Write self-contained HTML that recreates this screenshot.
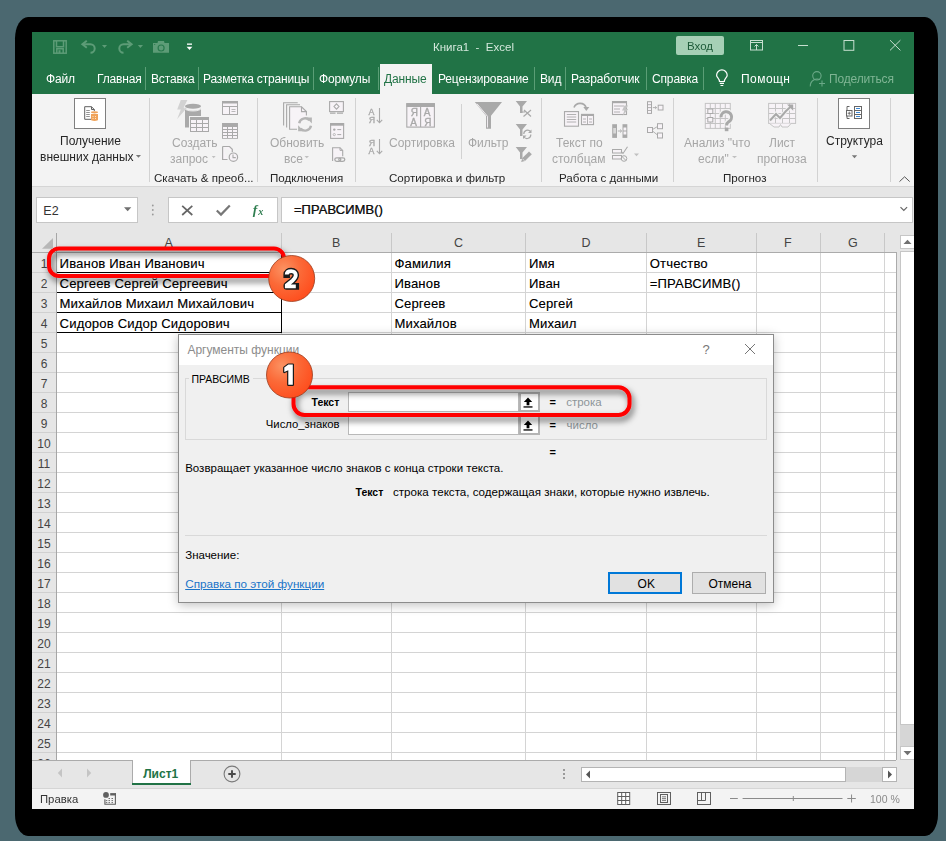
<!DOCTYPE html>
<html><head><meta charset="utf-8">
<style>
*{margin:0;padding:0;box-sizing:border-box}
html,body{width:946px;height:841px;overflow:hidden;background:#4b6870;font-family:"Liberation Sans",sans-serif;position:relative}
.a{position:absolute}
.t{position:absolute;white-space:nowrap;line-height:1}
svg{position:absolute;overflow:visible}
</style></head><body>
<div class="a" style="left:15px;top:17px;width:923px;height:819px;background:#000;border-radius:13px / 21.5px"></div>
<div class="a" style="left:32px;top:32px;width:882px;height:777px;background:#fff;"></div>
<div class="a" style="left:32px;top:32px;width:882px;height:62px;background:#217346;"></div>
<div class="t" style="left:432.50px;top:42px;font-size:11.5px;color:#d4e8dc;font-weight:normal;will-change:transform">Книга1&nbsp; -&nbsp; Excel</div>
<div class="a" style="left:676px;top:36px;width:48px;height:19px;background:#a6d0b6;border-radius:2px"></div>
<div class="t" style="left:687.00px;top:41px;font-size:11.5px;color:#1e5b39;font-weight:normal;will-change:transform">Вход</div>
<div class="t" style="left:46.00px;top:73px;font-size:12px;color:#fff;font-weight:normal;will-change:transform;letter-spacing:-0.15px">Файл</div>
<div class="t" style="left:97.00px;top:73px;font-size:12px;color:#fff;font-weight:normal;will-change:transform;letter-spacing:-0.15px">Главная</div>
<div class="t" style="left:151.00px;top:73px;font-size:12px;color:#fff;font-weight:normal;will-change:transform;letter-spacing:-0.15px">Вставка</div>
<div class="t" style="left:203.00px;top:73px;font-size:12px;color:#fff;font-weight:normal;will-change:transform;letter-spacing:-0.15px">Разметка страницы</div>
<div class="t" style="left:319.00px;top:73px;font-size:12px;color:#fff;font-weight:normal;will-change:transform;letter-spacing:-0.15px">Формулы</div>
<div class="t" style="left:438.00px;top:73px;font-size:12px;color:#fff;font-weight:normal;will-change:transform;letter-spacing:-0.15px">Рецензирование</div>
<div class="t" style="left:540.00px;top:73px;font-size:12px;color:#fff;font-weight:normal;will-change:transform;letter-spacing:-0.15px">Вид</div>
<div class="t" style="left:571.00px;top:73px;font-size:12px;color:#fff;font-weight:normal;will-change:transform;letter-spacing:-0.15px">Разработчик</div>
<div class="t" style="left:652.00px;top:73px;font-size:12px;color:#fff;font-weight:normal;will-change:transform;letter-spacing:-0.15px">Справка</div>
<div class="t" style="left:741.00px;top:73px;font-size:12px;color:#fff;font-weight:normal;will-change:transform;letter-spacing:0.45px">Помощн</div>
<div class="a" style="left:145px;top:67px;width:1px;height:23px;background:#5a9e76;"></div>
<div class="a" style="left:198px;top:67px;width:1px;height:23px;background:#5a9e76;"></div>
<div class="a" style="left:313px;top:67px;width:1px;height:23px;background:#5a9e76;"></div>
<div class="a" style="left:378px;top:67px;width:1px;height:23px;background:#5a9e76;"></div>
<div class="a" style="left:534px;top:67px;width:1px;height:23px;background:#5a9e76;"></div>
<div class="a" style="left:565px;top:67px;width:1px;height:23px;background:#5a9e76;"></div>
<div class="a" style="left:646px;top:67px;width:1px;height:23px;background:#5a9e76;"></div>
<div class="a" style="left:703px;top:67px;width:1px;height:23px;background:#5a9e76;"></div>
<div class="a" style="left:380px;top:64px;width:52px;height:30px;background:#f3f3f3;"></div>
<div class="t" style="left:383.50px;top:73px;font-size:12px;color:#217346;font-weight:normal;will-change:transform;letter-spacing:-0.15px">Данные</div>
<div class="t" style="left:829.00px;top:73px;font-size:12px;color:#7fb594;font-weight:normal;will-change:transform;letter-spacing:-0.15px">Поделиться</div>
<div class="a" style="left:32px;top:94px;width:882px;height:92px;background:#f3f3f3;"></div>
<div class="a" style="left:32px;top:186px;width:882px;height:1px;background:#d5d5d5;"></div>
<div class="a" style="left:32px;top:187px;width:882px;height:45px;background:#e6e6e6;"></div>
<div class="t" style="left:59.50px;top:135px;font-size:12px;color:#262626;font-weight:normal;will-change:transform">Получение</div>
<div class="t" style="left:39.80px;top:151px;font-size:12px;color:#262626;font-weight:normal;will-change:transform">внешних данных</div>
<div class="t" style="left:153.70px;top:172px;font-size:11.6px;color:#262626;font-weight:normal;will-change:transform">Скачать &amp; преоб...</div>
<div class="t" style="left:172.00px;top:137px;font-size:12px;color:#a6a6a6;font-weight:normal;will-change:transform">Создать</div>
<div class="t" style="left:169.50px;top:153px;font-size:12px;color:#a6a6a6;font-weight:normal;will-change:transform">запрос</div>
<div class="t" style="left:269.50px;top:137px;font-size:12px;color:#a6a6a6;font-weight:normal;will-change:transform">Обновить</div>
<div class="t" style="left:283.70px;top:153px;font-size:12px;color:#a6a6a6;font-weight:normal;will-change:transform">все</div>
<div class="t" style="left:269.50px;top:172px;font-size:11.6px;color:#262626;font-weight:normal;will-change:transform">Подключения</div>
<div class="t" style="left:388.70px;top:137px;font-size:12px;color:#a6a6a6;font-weight:normal;will-change:transform">Сортировка</div>
<div class="t" style="left:468.00px;top:137px;font-size:12px;color:#a6a6a6;font-weight:normal;will-change:transform">Фильтр</div>
<div class="t" style="left:389.30px;top:172px;font-size:11.6px;color:#262626;font-weight:normal;will-change:transform">Сортировка и фильтр</div>
<div class="t" style="left:556.00px;top:137px;font-size:12px;color:#a6a6a6;font-weight:normal;will-change:transform">Текст по</div>
<div class="t" style="left:552.00px;top:153px;font-size:12px;color:#a6a6a6;font-weight:normal;will-change:transform">столбцам</div>
<div class="t" style="left:559.30px;top:172px;font-size:11.6px;color:#262626;font-weight:normal;will-change:transform">Работа с данными</div>
<div class="t" style="left:684.00px;top:137px;font-size:12px;color:#a6a6a6;font-weight:normal;will-change:transform">Анализ "что</div>
<div class="t" style="left:698.20px;top:153px;font-size:12px;color:#a6a6a6;font-weight:normal;will-change:transform">если"</div>
<div class="t" style="left:768.60px;top:137px;font-size:12px;color:#a6a6a6;font-weight:normal;will-change:transform">Лист</div>
<div class="t" style="left:756.90px;top:153px;font-size:12px;color:#a6a6a6;font-weight:normal;will-change:transform">прогноза</div>
<div class="t" style="left:722.60px;top:172px;font-size:11.6px;color:#262626;font-weight:normal;will-change:transform">Прогноз</div>
<div class="t" style="left:826.00px;top:135px;font-size:12px;color:#262626;font-weight:normal;will-change:transform">Структура</div>
<div class="a" style="left:149px;top:98px;width:1px;height:84px;background:#d2d2d2;"></div>
<div class="a" style="left:257px;top:98px;width:1px;height:84px;background:#d2d2d2;"></div>
<div class="a" style="left:355px;top:98px;width:1px;height:84px;background:#d2d2d2;"></div>
<div class="a" style="left:541px;top:98px;width:1px;height:84px;background:#d2d2d2;"></div>
<div class="a" style="left:673px;top:98px;width:1px;height:84px;background:#d2d2d2;"></div>
<div class="a" style="left:817px;top:98px;width:1px;height:84px;background:#d2d2d2;"></div>
<div class="a" style="left:890px;top:98px;width:1px;height:84px;background:#d2d2d2;"></div>
<div class="a" style="left:461px;top:104px;width:1px;height:55px;background:#d2d2d2;"></div>
<div class="a" style="left:36px;top:197px;width:102px;height:26px;background:#fff;border:1px solid #c6c6c6"></div>
<div class="t" style="left:43.30px;top:205px;font-size:12.5px;color:#333;font-weight:normal;">E2</div>
<div class="a" style="left:168px;top:197px;width:110px;height:26px;background:#fff;border:1px solid #c6c6c6"></div>
<div class="a" style="left:281px;top:197px;width:632px;height:26px;background:#fff;border:1px solid #c6c6c6"></div>
<div class="t" style="left:293.70px;top:203px;font-size:13px;color:#111;font-weight:normal;letter-spacing:0.05px;text-shadow:0.45px 0 0 rgba(0,0,0,0.7)">=ПРАВСИМВ()</div>
<div class="a" style="left:32px;top:232px;width:864px;height:528px;background:#e6e6e6;"></div>
<div class="a" style="left:57px;top:252px;width:840px;height:508px;background:#fff;"></div>
<div class="a" style="left:281px;top:252px;width:1px;height:508px;background:#d4d4d4;"></div>
<div class="a" style="left:281px;top:233px;width:1px;height:19px;background:#c8c8c8;"></div>
<div class="a" style="left:391px;top:252px;width:1px;height:508px;background:#d4d4d4;"></div>
<div class="a" style="left:391px;top:233px;width:1px;height:19px;background:#c8c8c8;"></div>
<div class="a" style="left:525px;top:252px;width:1px;height:508px;background:#d4d4d4;"></div>
<div class="a" style="left:525px;top:233px;width:1px;height:19px;background:#c8c8c8;"></div>
<div class="a" style="left:646px;top:252px;width:1px;height:508px;background:#d4d4d4;"></div>
<div class="a" style="left:646px;top:233px;width:1px;height:19px;background:#c8c8c8;"></div>
<div class="a" style="left:756px;top:252px;width:1px;height:508px;background:#d4d4d4;"></div>
<div class="a" style="left:756px;top:233px;width:1px;height:19px;background:#c8c8c8;"></div>
<div class="a" style="left:820px;top:252px;width:1px;height:508px;background:#d4d4d4;"></div>
<div class="a" style="left:820px;top:233px;width:1px;height:19px;background:#c8c8c8;"></div>
<div class="a" style="left:884px;top:252px;width:1px;height:508px;background:#d4d4d4;"></div>
<div class="a" style="left:884px;top:233px;width:1px;height:19px;background:#c8c8c8;"></div>
<div class="a" style="left:56px;top:233px;width:1px;height:527px;background:#bdbdbd;"></div>
<div class="a" style="left:57px;top:272px;width:840px;height:1px;background:#d4d4d4;"></div>
<div class="a" style="left:32px;top:272px;width:24px;height:1px;background:#d0d0d0;"></div>
<div class="a" style="left:57px;top:292px;width:840px;height:1px;background:#d4d4d4;"></div>
<div class="a" style="left:32px;top:292px;width:24px;height:1px;background:#d0d0d0;"></div>
<div class="a" style="left:57px;top:312px;width:840px;height:1px;background:#d4d4d4;"></div>
<div class="a" style="left:32px;top:312px;width:24px;height:1px;background:#d0d0d0;"></div>
<div class="a" style="left:57px;top:332px;width:840px;height:1px;background:#d4d4d4;"></div>
<div class="a" style="left:32px;top:332px;width:24px;height:1px;background:#d0d0d0;"></div>
<div class="a" style="left:57px;top:352px;width:840px;height:1px;background:#d4d4d4;"></div>
<div class="a" style="left:32px;top:352px;width:24px;height:1px;background:#d0d0d0;"></div>
<div class="a" style="left:57px;top:372px;width:840px;height:1px;background:#d4d4d4;"></div>
<div class="a" style="left:32px;top:372px;width:24px;height:1px;background:#d0d0d0;"></div>
<div class="a" style="left:57px;top:392px;width:840px;height:1px;background:#d4d4d4;"></div>
<div class="a" style="left:32px;top:392px;width:24px;height:1px;background:#d0d0d0;"></div>
<div class="a" style="left:57px;top:412px;width:840px;height:1px;background:#d4d4d4;"></div>
<div class="a" style="left:32px;top:412px;width:24px;height:1px;background:#d0d0d0;"></div>
<div class="a" style="left:57px;top:432px;width:840px;height:1px;background:#d4d4d4;"></div>
<div class="a" style="left:32px;top:432px;width:24px;height:1px;background:#d0d0d0;"></div>
<div class="a" style="left:57px;top:452px;width:840px;height:1px;background:#d4d4d4;"></div>
<div class="a" style="left:32px;top:452px;width:24px;height:1px;background:#d0d0d0;"></div>
<div class="a" style="left:57px;top:472px;width:840px;height:1px;background:#d4d4d4;"></div>
<div class="a" style="left:32px;top:472px;width:24px;height:1px;background:#d0d0d0;"></div>
<div class="a" style="left:57px;top:492px;width:840px;height:1px;background:#d4d4d4;"></div>
<div class="a" style="left:32px;top:492px;width:24px;height:1px;background:#d0d0d0;"></div>
<div class="a" style="left:57px;top:512px;width:840px;height:1px;background:#d4d4d4;"></div>
<div class="a" style="left:32px;top:512px;width:24px;height:1px;background:#d0d0d0;"></div>
<div class="a" style="left:57px;top:532px;width:840px;height:1px;background:#d4d4d4;"></div>
<div class="a" style="left:32px;top:532px;width:24px;height:1px;background:#d0d0d0;"></div>
<div class="a" style="left:57px;top:552px;width:840px;height:1px;background:#d4d4d4;"></div>
<div class="a" style="left:32px;top:552px;width:24px;height:1px;background:#d0d0d0;"></div>
<div class="a" style="left:57px;top:572px;width:840px;height:1px;background:#d4d4d4;"></div>
<div class="a" style="left:32px;top:572px;width:24px;height:1px;background:#d0d0d0;"></div>
<div class="a" style="left:57px;top:592px;width:840px;height:1px;background:#d4d4d4;"></div>
<div class="a" style="left:32px;top:592px;width:24px;height:1px;background:#d0d0d0;"></div>
<div class="a" style="left:57px;top:612px;width:840px;height:1px;background:#d4d4d4;"></div>
<div class="a" style="left:32px;top:612px;width:24px;height:1px;background:#d0d0d0;"></div>
<div class="a" style="left:57px;top:632px;width:840px;height:1px;background:#d4d4d4;"></div>
<div class="a" style="left:32px;top:632px;width:24px;height:1px;background:#d0d0d0;"></div>
<div class="a" style="left:57px;top:652px;width:840px;height:1px;background:#d4d4d4;"></div>
<div class="a" style="left:32px;top:652px;width:24px;height:1px;background:#d0d0d0;"></div>
<div class="a" style="left:57px;top:672px;width:840px;height:1px;background:#d4d4d4;"></div>
<div class="a" style="left:32px;top:672px;width:24px;height:1px;background:#d0d0d0;"></div>
<div class="a" style="left:57px;top:692px;width:840px;height:1px;background:#d4d4d4;"></div>
<div class="a" style="left:32px;top:692px;width:24px;height:1px;background:#d0d0d0;"></div>
<div class="a" style="left:57px;top:712px;width:840px;height:1px;background:#d4d4d4;"></div>
<div class="a" style="left:32px;top:712px;width:24px;height:1px;background:#d0d0d0;"></div>
<div class="a" style="left:57px;top:732px;width:840px;height:1px;background:#d4d4d4;"></div>
<div class="a" style="left:32px;top:732px;width:24px;height:1px;background:#d0d0d0;"></div>
<div class="a" style="left:57px;top:752px;width:840px;height:1px;background:#d4d4d4;"></div>
<div class="a" style="left:32px;top:752px;width:24px;height:1px;background:#d0d0d0;"></div>
<div class="a" style="left:57px;top:772px;width:840px;height:1px;background:#d4d4d4;"></div>
<div class="a" style="left:32px;top:772px;width:24px;height:1px;background:#d0d0d0;"></div>
<div class="a" style="left:32px;top:252px;width:865px;height:1px;background:#ababab;"></div>
<div class="a" style="left:896px;top:252px;width:1px;height:508px;background:#ababab;"></div>
<div class="t" style="left:164.50px;top:237px;font-size:12.5px;color:#444;font-weight:normal;">A</div>
<div class="t" style="left:332.00px;top:237px;font-size:12.5px;color:#444;font-weight:normal;">B</div>
<div class="t" style="left:454.00px;top:237px;font-size:12.5px;color:#444;font-weight:normal;">C</div>
<div class="t" style="left:581.50px;top:237px;font-size:12.5px;color:#444;font-weight:normal;">D</div>
<div class="t" style="left:697.00px;top:237px;font-size:12.5px;color:#444;font-weight:normal;">E</div>
<div class="t" style="left:784.00px;top:237px;font-size:12.5px;color:#444;font-weight:normal;">F</div>
<div class="t" style="left:848.00px;top:237px;font-size:12.5px;color:#444;font-weight:normal;">G</div>
<div class="t" style="left:-6.00px;width:100px;text-align:center;top:258px;font-size:12px;color:#444;font-weight:normal;">1</div>
<div class="t" style="left:-6.00px;width:100px;text-align:center;top:278px;font-size:12px;color:#444;font-weight:normal;">2</div>
<div class="t" style="left:-6.00px;width:100px;text-align:center;top:298px;font-size:12px;color:#444;font-weight:normal;">3</div>
<div class="t" style="left:-6.00px;width:100px;text-align:center;top:318px;font-size:12px;color:#444;font-weight:normal;">4</div>
<div class="t" style="left:-6.00px;width:100px;text-align:center;top:338px;font-size:12px;color:#444;font-weight:normal;">5</div>
<div class="t" style="left:-6.00px;width:100px;text-align:center;top:358px;font-size:12px;color:#444;font-weight:normal;">6</div>
<div class="t" style="left:-6.00px;width:100px;text-align:center;top:378px;font-size:12px;color:#444;font-weight:normal;">7</div>
<div class="t" style="left:-6.00px;width:100px;text-align:center;top:398px;font-size:12px;color:#444;font-weight:normal;">8</div>
<div class="t" style="left:-6.00px;width:100px;text-align:center;top:418px;font-size:12px;color:#444;font-weight:normal;">9</div>
<div class="t" style="left:-6.00px;width:100px;text-align:center;top:438px;font-size:12px;color:#444;font-weight:normal;">10</div>
<div class="t" style="left:-6.00px;width:100px;text-align:center;top:458px;font-size:12px;color:#444;font-weight:normal;">11</div>
<div class="t" style="left:-6.00px;width:100px;text-align:center;top:478px;font-size:12px;color:#444;font-weight:normal;">12</div>
<div class="t" style="left:-6.00px;width:100px;text-align:center;top:498px;font-size:12px;color:#444;font-weight:normal;">13</div>
<div class="t" style="left:-6.00px;width:100px;text-align:center;top:518px;font-size:12px;color:#444;font-weight:normal;">14</div>
<div class="t" style="left:-6.00px;width:100px;text-align:center;top:538px;font-size:12px;color:#444;font-weight:normal;">15</div>
<div class="t" style="left:-6.00px;width:100px;text-align:center;top:558px;font-size:12px;color:#444;font-weight:normal;">16</div>
<div class="t" style="left:-6.00px;width:100px;text-align:center;top:578px;font-size:12px;color:#444;font-weight:normal;">17</div>
<div class="t" style="left:-6.00px;width:100px;text-align:center;top:598px;font-size:12px;color:#444;font-weight:normal;">18</div>
<div class="t" style="left:-6.00px;width:100px;text-align:center;top:618px;font-size:12px;color:#444;font-weight:normal;">19</div>
<div class="t" style="left:-6.00px;width:100px;text-align:center;top:638px;font-size:12px;color:#444;font-weight:normal;">20</div>
<div class="t" style="left:-6.00px;width:100px;text-align:center;top:658px;font-size:12px;color:#444;font-weight:normal;">21</div>
<div class="t" style="left:-6.00px;width:100px;text-align:center;top:678px;font-size:12px;color:#444;font-weight:normal;">22</div>
<div class="t" style="left:-6.00px;width:100px;text-align:center;top:698px;font-size:12px;color:#444;font-weight:normal;">23</div>
<div class="t" style="left:-6.00px;width:100px;text-align:center;top:718px;font-size:12px;color:#444;font-weight:normal;">24</div>
<div class="t" style="left:-6.00px;width:100px;text-align:center;top:738px;font-size:12px;color:#444;font-weight:normal;">25</div>
<div class="t" style="left:-6.00px;width:100px;text-align:center;top:758px;font-size:12px;color:#444;font-weight:normal;">26</div>
<div class="a" style="left:32px;top:760px;width:882px;height:28px;background:#e6e6e6;"></div>
<div class="a" style="left:32px;top:760px;width:864px;height:1px;background:#ababab;"></div>
<div class="a" style="left:32px;top:788px;width:882px;height:21px;background:#f3f3f3;"></div>
<div class="a" style="left:32px;top:788px;width:882px;height:1px;background:#d5d5d5;"></div>
<div class="a" style="left:896px;top:232px;width:18px;height:528px;background:#e6e6e6;"></div>
<div class="a" style="left:896px;top:252px;width:1px;height:508px;background:#ababab;"></div>
<div class="a" style="left:900px;top:235px;width:14px;height:14px;background:#fff;border:1px solid #c6c6c6;border-right:none"></div>
<div class="a" style="left:900px;top:251px;width:14px;height:474px;background:#fff;border:1px solid #c6c6c6;border-right:none"></div>
<div class="a" style="left:900px;top:725px;width:14px;height:21px;background:#d6d6d6;"></div>
<div class="a" style="left:900px;top:746px;width:14px;height:14px;background:#fff;border:1px solid #c6c6c6;border-right:none"></div>
<svg style="left:903px;top:239px" width="9" height="6"><path d="M0.5 5 L4.5 0.8 L8.5 5Z" fill="#707070"/></svg>
<svg style="left:903px;top:750px" width="9" height="6"><path d="M0.5 1 L4.5 5.2 L8.5 1Z" fill="#707070"/></svg>
<svg style="left:57px;top:768px" width="6" height="10"><path d="M5 0.5 L0.8 5 L5 9.5Z" fill="#c4c4c4"/></svg>
<svg style="left:86px;top:768px" width="6" height="10"><path d="M1 0.5 L5.2 5 L1 9.5Z" fill="#c4c4c4"/></svg>
<div class="a" style="left:131.5px;top:760px;width:59px;height:24px;background:#fff;border-left:1px solid #ababab;border-right:1px solid #ababab"></div>
<div class="a" style="left:131.5px;top:783px;width:59px;height:2px;background:#217346;"></div>
<div class="t" style="left:143.20px;top:768px;font-size:12px;color:#217346;font-weight:bold;">Лист1</div>
<svg style="left:223px;top:765px" width="18" height="18"><circle cx="9" cy="9" r="7.9" fill="none" stroke="#7a7a7a" stroke-width="1.1"/><path d="M9 5.3V12.7M5.3 9H12.7" stroke="#4a4a4a" stroke-width="1.9"/></svg>
<div class="a" style="left:563px;top:769px;width:2px;height:2px;background:#9a9a9a;"></div>
<div class="a" style="left:563px;top:773px;width:2px;height:2px;background:#9a9a9a;"></div>
<div class="a" style="left:563px;top:777px;width:2px;height:2px;background:#9a9a9a;"></div>
<div class="a" style="left:580.5px;top:767px;width:15px;height:15px;background:#fff;border:1px solid #b4b4b4"></div>
<div class="a" style="left:595px;top:767px;width:251px;height:15px;background:#fff;border:1px solid #b4b4b4;border-left:none"></div>
<div class="a" style="left:846px;top:767px;width:36px;height:15px;background:#d6d6d6;"></div>
<div class="a" style="left:882px;top:767px;width:15px;height:15px;background:#fff;border:1px solid #b4b4b4"></div>
<svg style="left:585px;top:770px" width="6" height="9"><path d="M5 0.5 L1 4.5 L5 8.5Z" fill="#555"/></svg>
<svg style="left:887px;top:770px" width="6" height="9"><path d="M1 0.5 L5 4.5 L1 8.5Z" fill="#555"/></svg>
<div class="t" style="left:39.50px;top:794px;font-size:11.3px;color:#333;font-weight:normal;will-change:transform">Правка</div>
<div class="t" style="left:869.50px;top:794px;font-size:10.5px;color:#8a8a8a;font-weight:normal;will-change:transform">100 %</div>
<div class="t" style="left:59.60px;top:257px;font-size:13px;color:#000;font-weight:normal;letter-spacing:0.2px;text-shadow:0.3px 0 0 rgba(0,0,0,0.35)">Иванов Иван Иванович</div>
<div class="t" style="left:59.60px;top:277px;font-size:13px;color:#000;font-weight:normal;letter-spacing:0.2px;text-shadow:0.3px 0 0 rgba(0,0,0,0.35)">Сергеев Сергей Сергеевич</div>
<div class="t" style="left:59.60px;top:297px;font-size:13px;color:#000;font-weight:normal;letter-spacing:0.2px;text-shadow:0.3px 0 0 rgba(0,0,0,0.35)">Михайлов Михаил Михайлович</div>
<div class="t" style="left:59.60px;top:317px;font-size:13px;color:#000;font-weight:normal;letter-spacing:0.2px;text-shadow:0.3px 0 0 rgba(0,0,0,0.35)">Сидоров Сидор Сидорович</div>
<div class="t" style="left:394.40px;top:257px;font-size:13px;color:#000;font-weight:normal;letter-spacing:0.2px;text-shadow:0.3px 0 0 rgba(0,0,0,0.35)">Фамилия</div>
<div class="t" style="left:528.90px;top:257px;font-size:13px;color:#000;font-weight:normal;letter-spacing:0.2px;text-shadow:0.3px 0 0 rgba(0,0,0,0.35)">Имя</div>
<div class="t" style="left:649.70px;top:257px;font-size:13px;color:#000;font-weight:normal;letter-spacing:0.2px;text-shadow:0.3px 0 0 rgba(0,0,0,0.35)">Отчество</div>
<div class="t" style="left:394.40px;top:277px;font-size:13px;color:#000;font-weight:normal;letter-spacing:0.2px;text-shadow:0.3px 0 0 rgba(0,0,0,0.35)">Иванов</div>
<div class="t" style="left:528.90px;top:277px;font-size:13px;color:#000;font-weight:normal;letter-spacing:0.2px;text-shadow:0.3px 0 0 rgba(0,0,0,0.35)">Иван</div>
<div class="t" style="left:649.70px;top:277px;font-size:13px;color:#000;font-weight:normal;letter-spacing:0.2px;text-shadow:0.3px 0 0 rgba(0,0,0,0.35)">=ПРАВСИМВ()</div>
<div class="t" style="left:394.40px;top:297px;font-size:13px;color:#000;font-weight:normal;letter-spacing:0.2px;text-shadow:0.3px 0 0 rgba(0,0,0,0.35)">Сергеев</div>
<div class="t" style="left:528.90px;top:297px;font-size:13px;color:#000;font-weight:normal;letter-spacing:0.2px;text-shadow:0.3px 0 0 rgba(0,0,0,0.35)">Сергей</div>
<div class="t" style="left:394.40px;top:317px;font-size:13px;color:#000;font-weight:normal;letter-spacing:0.2px;text-shadow:0.3px 0 0 rgba(0,0,0,0.35)">Михайлов</div>
<div class="t" style="left:528.90px;top:317px;font-size:13px;color:#000;font-weight:normal;letter-spacing:0.2px;text-shadow:0.3px 0 0 rgba(0,0,0,0.35)">Михаил</div>
<div class="a" style="left:57px;top:272px;width:225px;height:1px;background:#000;"></div>
<div class="a" style="left:57px;top:292px;width:225px;height:1px;background:#000;"></div>
<div class="a" style="left:57px;top:312px;width:225px;height:1px;background:#000;"></div>
<div class="a" style="left:57px;top:332px;width:225px;height:1px;background:#000;"></div>
<div class="a" style="left:281px;top:252px;width:1px;height:81px;background:#000;"></div>
<div class="a" style="left:56px;top:233px;width:1px;height:527px;background:#a6a6a6;"></div>
<div class="a" style="left:178px;top:334px;width:596px;height:269px;background:#f0f0f0;border:1px solid #8c8c8c;box-shadow:0 2px 10px rgba(0,0,0,0.25)"></div>
<div class="a" style="left:179px;top:335px;width:594px;height:30px;background:#fff;"></div>
<div class="t" style="left:187.40px;top:344px;font-size:12px;color:#8c8c8c;font-weight:normal;">Аргументы функции</div>
<div class="t" style="left:702.50px;top:343px;font-size:13px;color:#777;font-weight:normal;">?</div>
<svg style="left:744px;top:343px" width="12" height="12"><path d="M1 1L11 11M11 1L1 11" stroke="#666" stroke-width="0.9"/></svg>
<div class="a" style="left:185px;top:378px;width:582px;height:62px;background:none;border:1px solid #d9d9d9"></div>
<div class="a" style="left:189px;top:374px;width:64px;height:10px;background:#f0f0f0;"></div>
<div class="t" style="left:191.40px;top:374px;font-size:10.5px;color:#000;font-weight:normal;">ПРАВСИМВ</div>
<div class="t" style="left:311.50px;top:397px;font-size:10.5px;color:#000;font-weight:bold;">Текст</div>
<div class="t" style="left:265.80px;top:419px;font-size:11.3px;color:#000;font-weight:normal;">Число_знаков</div>
<div class="a" style="left:348px;top:392px;width:171px;height:20px;background:#fff;border:1px solid #b9b9b9"></div>
<div class="a" style="left:348px;top:415px;width:171px;height:20px;background:#fff;border:1px solid #b9b9b9"></div>
<div class="a" style="left:518.5px;top:392px;width:21px;height:19.5px;background:#fff;border:2px solid #b4b4b4"></div>
<svg style="left:523px;top:397px" width="10" height="11"><path d="M5 0.5L9.2 5H6.4V8.2H3.6V5H0.8Z" fill="#000"/><rect x="0.5" y="9.3" width="9" height="1.3" fill="#000"/></svg>
<div class="a" style="left:518.5px;top:415px;width:21px;height:19.5px;background:#fff;border:2px solid #b4b4b4"></div>
<svg style="left:523px;top:420px" width="10" height="11"><path d="M5 0.5L9.2 5H6.4V8.2H3.6V5H0.8Z" fill="#000"/><rect x="0.5" y="9.3" width="9" height="1.3" fill="#000"/></svg>
<div class="t" style="left:549.60px;top:397px;font-size:11px;color:#000;font-weight:bold;">=</div>
<div class="t" style="left:549.60px;top:420px;font-size:11px;color:#000;font-weight:bold;">=</div>
<div class="t" style="left:566.20px;top:397px;font-size:11.5px;color:#8d9599;font-weight:normal;">строка</div>
<div class="t" style="left:566.50px;top:420px;font-size:11.5px;color:#8d9599;font-weight:normal;">число</div>
<div class="t" style="left:549.60px;top:447px;font-size:11px;color:#000;font-weight:bold;">=</div>
<div class="t" style="left:185.20px;top:463px;font-size:11.5px;color:#000;font-weight:normal;">Возвращает указанное число знаков с конца строки текста.</div>
<div class="t" style="left:355.50px;top:487px;font-size:10.5px;color:#000;font-weight:bold;">Текст</div>
<div class="t" style="left:393.00px;top:486px;font-size:11.6px;color:#000;font-weight:normal;">строка текста, содержащая знаки, которые нужно извлечь.</div>
<div class="a" style="left:185px;top:535px;width:582px;height:1px;background:#d9d9d9;"></div>
<div class="t" style="left:185.20px;top:550px;font-size:11.5px;color:#000;font-weight:normal;">Значение:</div>
<div class="t" style="left:185.20px;top:578px;font-size:11.7px;color:#1a74c8;font-weight:normal;text-decoration:underline">Справка по этой функции</div>
<div class="a" style="left:608px;top:572px;width:74px;height:22px;background:#e1e1e1;border:2px solid #0078d7"></div>
<div class="t" style="left:637.60px;top:578px;font-size:12px;color:#000;font-weight:normal;">OK</div>
<div class="a" style="left:692px;top:572px;width:74px;height:22px;background:#e1e1e1;border:1px solid #adadad"></div>
<div class="t" style="left:708.40px;top:578px;font-size:12px;color:#000;font-weight:normal;">Отмена</div>
<svg style="left:0;top:0" width="946" height="841">
<defs>
<filter id="sh" x="-20%" y="-50%" width="140%" height="200%"><feGaussianBlur in="SourceAlpha" stdDeviation="3"/><feOffset dx="2" dy="3.5" result="b"/><feFlood flood-color="#000" flood-opacity="0.6"/><feComposite in2="b" operator="in"/><feMerge><feMergeNode/><feMergeNode in="SourceGraphic"/></feMerge></filter>
<radialGradient id="og" cx="0.33" cy="0.3" r="0.8"><stop offset="0" stop-color="#fb9262"/><stop offset="0.45" stop-color="#fb6a38"/><stop offset="1" stop-color="#ff4a1a"/></radialGradient>
</defs>
<rect x="49" y="248.5" width="235" height="27.5" rx="10" fill="none" stroke="#ff0000" stroke-width="4" filter="url(#sh)"/>
<rect x="293.5" y="387.3" width="336" height="27.7" rx="11" fill="none" stroke="#ff0000" stroke-width="4" filter="url(#sh)"/>
<circle cx="291.7" cy="278.5" r="23" fill="url(#og)" stroke="#9a3a1a" stroke-width="0.8"/>
<circle cx="289.5" cy="375" r="23" fill="url(#og)" stroke="#9a3a1a" stroke-width="0.8"/>
<path d="M286.7 274.6C286.7 272.2 288.6 271.1 291.2 271.1C294 271.1 295.8 272.7 295.8 275.1C295.8 277.4 294.5 278.9 292.4 280.7L286.8 285.2V286.4H295.8" fill="none" stroke="#1a1a1a" stroke-width="6.6" stroke-linejoin="round" stroke-linecap="square"/><path d="M286.7 274.6C286.7 272.2 288.6 271.1 291.2 271.1C294 271.1 295.8 272.7 295.8 275.1C295.8 277.4 294.5 278.9 292.4 280.7L286.8 285.2V286.4H295.8" fill="none" stroke="#fff" stroke-width="3.8" stroke-linejoin="miter"/>
<path d="M288.3 364.6H292.8V384.8H288.3V370.2L284.3 372V367.6Z" fill="#fff" stroke="#1a1a1a" stroke-width="2.4" stroke-linejoin="round" paint-order="stroke"/>
</svg>
<svg style="left:0;top:0;will-change:transform" width="946" height="841"><g fill="none" stroke="#5d9c77" stroke-width="1.5"><rect x="53.8" y="40.8" width="12.4" height="12.4"/><path d="M56.5 40.8V46.8H63.5V40.8"/><path d="M56.8 53.2V48.8H63.2V53.2"/></g><rect x="58.5" y="50.2" width="2" height="3" fill="#5d9c77"/><path d="M83 45.5H90.5A4.2 4.2 0 0 1 90.5 53.9" fill="none" stroke="#5d9c77" stroke-width="2" transform="translate(0,-1.2)"/><path d="M86.8 40.8L82.4 44.3L86.8 47.8" fill="none" stroke="#5d9c77" stroke-width="2"/><path d="M102 45H107L104.5 48Z" fill="#5d9c77"/><path d="M131 45.5H123.5A4.2 4.2 0 0 0 123.5 53.9" fill="none" stroke="#5d9c77" stroke-width="2" transform="translate(0,-1.2)"/><path d="M127.2 40.8L131.6 44.3L127.2 47.8" fill="none" stroke="#5d9c77" stroke-width="2"/><path d="M137.8 45H143L140.4 48Z" fill="#5d9c77"/><path d="M153 43H157.5L158 41H164L164.5 43H169V52.8H153Z" fill="#5d9c77"/><circle cx="161.1" cy="48" r="3" fill="none" stroke="#2a7a4e" stroke-width="1.2"/><rect x="154.2" y="44" width="1" height="1" fill="#2a7a4e"/><rect x="187" y="43.5" width="5" height="1.3" fill="#fff"/><path d="M186.6 46.8H192.4L189.5 50Z" fill="#fff"/><g fill="none" stroke="#c6dfcf" stroke-width="1"><rect x="750.5" y="40.5" width="12" height="9.5"/><path d="M750.5 42.5H762.5M756.5 50V44.5M754.5 46.5L756.5 44.5L758.5 46.5"/></g><path d="M798 45.5H808" stroke="#c6dfcf" stroke-width="1"/><rect x="844" y="40.5" width="9.8" height="9.8" fill="none" stroke="#c6dfcf" stroke-width="1"/><path d="M890 40.2L900.4 50.4M900.4 40.2L890 50.4" stroke="#c6dfcf" stroke-width="1"/><path d="M719.5 81.5C719.5 78.5 716.6 77.5 716.6 75.2A5.3 5.3 0 0 1 727.2 75.2C727.2 77.5 724.3 78.5 724.3 81.5Z" fill="none" stroke="#fff" stroke-width="1.2"/><path d="M719.8 83.3H724M720.5 85.5H723.3" stroke="#fff" stroke-width="1.2"/><circle cx="816.9" cy="75.8" r="4.2" fill="none" stroke="#6aa887" stroke-width="1.1"/><path d="M810.3 86.4A7 7 0 0 1 820 79.6" fill="none" stroke="#6aa887" stroke-width="1.1"/><path d="M822 80.5V86.5M819 83.5H825" stroke="#6aa887" stroke-width="1.1"/><rect x="74.5" y="98.5" width="31" height="30" fill="#fff" stroke="#7f7f7f" stroke-width="1"/><path d="M84.7 106.7H91.5L94.3 109.5V111M91.5 119.3H84.7V106.7" fill="none" stroke="#616161" stroke-width="1"/><path d="M91.5 106.7V109.5H94.3" fill="none" stroke="#616161" stroke-width="1"/><path d="M86.2 110.5H89.8M86.2 112.5H89.8M86.2 114.5H89.8M86.2 116.5H89.8" stroke="#777" stroke-width="0.8"/><ellipse cx="94.5" cy="112.3" rx="3.5" ry="1.1" fill="#f0a35a"/><path d="M91 114H98V119.8A3.5 1.1 0 0 1 91 119.8Z" fill="#f0a35a"/><path d="M92.5 116.5h1M95 116.5h1M92.5 118.5h1M95 118.5h1" stroke="#fce8d0" stroke-width="0.9"/><path d="M180.8 100H187.4L183.6 107.8H187L177.2 119L180.8 109.6H177.2Z" fill="#d2d2d2"/><ellipse cx="193" cy="106.3" rx="8" ry="2.5" fill="#a9a9a9"/><path d="M185 108.3A8 2.5 0 0 0 201 108.3V127.5H185Z" fill="#a9a9a9"/><path d="M185 108.5A8 2.5 0 0 0 201 108.5" fill="none" stroke="#f3f3f3" stroke-width="0.8"/><rect x="189" y="116" width="21" height="17" fill="#f3f3f3"/><rect x="190" y="117" width="19" height="15" fill="#a9a9a9"/><g fill="#f7f3f7"><rect x="191" y="120" width="5" height="3"/><rect x="197" y="120" width="5" height="3"/><rect x="203" y="120" width="5" height="3"/><rect x="191" y="124" width="5" height="3"/><rect x="197" y="124" width="5" height="3"/><rect x="203" y="124" width="5" height="3"/><rect x="191" y="128" width="5" height="3"/><rect x="197" y="128" width="5" height="3"/><rect x="203" y="128" width="5" height="3"/></g><rect x="222" y="101" width="16" height="14" fill="#a9a9a9"/><rect x="223" y="103.5" width="14" height="2.5" fill="#f7f3f7"/><rect x="223" y="107" width="6" height="7" fill="#f7f3f7"/><rect x="230" y="107" width="7" height="7" fill="#f7f3f7"/><path d="M231.5 109.5H235.5M231.5 111.5H235.5" stroke="#a9a9a9" stroke-width="0.8"/><rect x="222" y="123" width="16" height="15.8" fill="#a9a9a9"/><g fill="#f7f3f7"><rect x="223" y="127" width="4" height="2"/><rect x="228" y="127" width="4" height="2"/><rect x="233" y="127" width="4" height="2"/><rect x="223" y="130" width="4" height="2"/><rect x="228" y="130" width="4" height="2"/><rect x="233" y="130" width="4" height="2"/><rect x="223" y="133" width="4" height="2"/><rect x="228" y="133" width="4" height="2"/><rect x="233" y="133" width="4" height="2"/><rect x="223" y="136" width="4" height="2"/><rect x="228" y="136" width="4" height="2"/><rect x="233" y="136" width="4" height="2"/></g><path d="M222.6 146.5H229.5L232.3 149.3V152M227.5 159.5H222.6V146.5" fill="#f7f3f7" stroke="#a9a9a9" stroke-width="1.2"/><circle cx="233.4" cy="157.2" r="4.2" fill="#f7f3f7" stroke="#a9a9a9" stroke-width="1.2"/><path d="M233 154.5V157.6H235.8" fill="none" stroke="#a9a9a9" stroke-width="1.1"/><g fill="none" stroke="#a9a9a9" stroke-width="1.1"><path d="M283.6 125.5V102.7H297.7"/><path d="M286.6 127.5V104.8H300"/></g><path d="M306.4 115.4V111.6L301.5 106.8H289.6V129.3H297" fill="#f7f3f7" stroke="#a9a9a9" stroke-width="1.1"/><path d="M301.5 106.8V111.6H306.4" fill="none" stroke="#a9a9a9" stroke-width="1.1"/><path d="M299.2 123.2A6 6 0 0 1 309.5 120.3" fill="none" stroke="#b5b5b5" stroke-width="2.4"/><path d="M311 125.8A6 6 0 0 1 300.6 128.5" fill="none" stroke="#b5b5b5" stroke-width="2.4"/><path d="M306.2 117.6H311.9V123.6Z" fill="#b5b5b5"/><path d="M303.8 131.2H298.1V125.2Z" fill="#b5b5b5"/><rect x="329.6" y="101.6" width="13.8" height="10" fill="#f7f3f7" stroke="#a9a9a9" stroke-width="1.1"/><path d="M330 113.2H335.5M337 113.2H343" stroke="#a9a9a9" stroke-width="1.3"/><path d="M336.5 103.8L339 106.5L336.5 109.2L334 106.5Z" fill="none" stroke="#a9a9a9" stroke-width="1.1"/><rect x="330.6" y="123.6" width="13" height="14.8" fill="#f7f3f7" stroke="#a9a9a9" stroke-width="1.1"/><rect x="330.1" y="123.1" width="14" height="2.6" fill="#a9a9a9"/><circle cx="334.3" cy="129.6" r="1.2" fill="#a9a9a9"/><circle cx="334.3" cy="134.6" r="1.1" fill="none" stroke="#a9a9a9" stroke-width="0.8"/><path d="M337.3 129.6H341.2M337.3 134.6H341.2" stroke="#a9a9a9" stroke-width="1"/><path d="M332.6 160.9V147.7H340L342.7 150.4V156.2" fill="#f7f3f7" stroke="#a9a9a9" stroke-width="1.1"/><path d="M340 147.7V150.4H342.7" fill="none" stroke="#a9a9a9" stroke-width="1"/><rect x="334.8" y="157.8" width="6" height="3.6" rx="1.8" fill="none" stroke="#a9a9a9" stroke-width="1.3"/><rect x="338.8" y="157.8" width="6" height="3.6" rx="1.8" fill="none" stroke="#a9a9a9" stroke-width="1.3"/><g font-family="Liberation Sans" font-size="8.8" fill="#a9a9a9" stroke="#a9a9a9" stroke-width="0.35"><text x="368.6" y="114.5">А</text><text x="368.8" y="123">Я</text><text x="368.8" y="145.5">Я</text><text x="368.6" y="153.8">А</text></g><path d="M379.5 108V122.5M376.8 119.8L379.5 122.8L382.2 119.8M379.5 139V153.5M376.8 150.8L379.5 153.8L382.2 150.8" fill="none" stroke="#a9a9a9" stroke-width="1.1"/><rect x="406.8" y="103.7" width="27.6" height="23.4" fill="#f7f3f7" stroke="#a9a9a9" stroke-width="1.1"/><rect x="406.3" y="103.2" width="28.6" height="3.8" fill="#a9a9a9"/><path d="M420.6 107V127" stroke="#a9a9a9" stroke-width="1.1"/><g font-family="Liberation Sans" font-size="10" fill="#a9a9a9" stroke="#a9a9a9" stroke-width="0.35"><text x="410.8" y="115.5">Я</text><text x="410.3" y="126">А</text><text x="423.8" y="115.5">А</text><text x="424.3" y="126">Я</text></g><path d="M474.8 102.1H502L491 115.8V128.8H486V115.8Z" fill="#a9a9a9"/><path d="M477 103.8L487.5 116.3V127.5" fill="none" stroke="#f7f3f7" stroke-width="0.9"/><path d="M515.7 101H527L522.5 106.5V113H520V106.5Z" fill="#a9a9a9"/><path d="M515.7 124H527L522.5 129.5V136H520V129.5Z" fill="#a9a9a9"/><path d="M515.7 147H527L522.5 152.5V159H520V152.5Z" fill="#a9a9a9"/><path d="M522 112H525M524 110L531 116.5M531 110L523.5 116.5" fill="none" stroke="#a9a9a9" stroke-width="1.2"/><path d="M523.8 134A3.8 3.8 0 0 1 530.5 131.5M530.8 134.5A3.8 3.8 0 0 1 524 137" fill="none" stroke="#a9a9a9" stroke-width="1.2"/><path d="M531.5 129.5V133H528Z M523 139V135.5H526.5Z" fill="#a9a9a9"/><path d="M521.2 162L522.2 158.2L529 151.4L531.8 154.2L525 161Z" fill="#a9a9a9"/><path d="M522.5 158.8L524.5 160.8" stroke="#f3f3f3" stroke-width="0.7"/><rect x="564.5" y="111.6" width="14" height="14.6" fill="#f7f3f7" stroke="#a9a9a9" stroke-width="1.1"/><path d="M566.8 114.5H576.2M566.8 117H576.2M566.8 119.5H576.2M566.8 122H576.2" stroke="#a9a9a9" stroke-width="0.9"/><rect x="581.5" y="114.4" width="12" height="10.2" fill="#f7f3f7" stroke="#a9a9a9" stroke-width="1.1"/><rect x="581" y="114" width="13" height="2" fill="#a9a9a9"/><path d="M587.5 116V124.5M583 119H586M589 119H592M583 122H586M589 122H592" stroke="#a9a9a9" stroke-width="0.9"/><path d="M574 107.5A6.5 6.5 0 0 1 586.2 107.8" fill="none" stroke="#a9a9a9" stroke-width="1.6"/><path d="M583.3 107L586.3 111L589.3 107Z" fill="#a9a9a9"/><rect x="612.5" y="101.7" width="14" height="12.8" fill="#f7f3f7" stroke="#a9a9a9" stroke-width="1.1"/><rect x="612" y="101.2" width="15" height="2" fill="#a9a9a9"/><path d="M614 106H624M614 109H620M614 112H620" stroke="#a9a9a9" stroke-width="0.9"/><path d="M624.5 105.5L628 105.5L626 109H628.2L622.5 116L624.3 110.5H622Z" fill="#c4c4c4"/><rect x="612.2" y="124.2" width="4.8" height="13.7" fill="#a9a9a9"/><rect x="613.2" y="128" width="2.8" height="5.5" fill="#d8d8d8"/><rect x="622.5" y="124.2" width="4.8" height="13.7" fill="#a9a9a9"/><rect x="623.5" y="127.5" width="2.8" height="3" fill="#f7f3f7"/><rect x="623.5" y="131.5" width="2.8" height="3" fill="#f7f3f7"/><path d="M617.8 131H621.5M620 129.5L621.7 131L620 132.5" fill="none" stroke="#a9a9a9" stroke-width="0.9"/><rect x="612.5" y="149.5" width="9" height="3.5" fill="#f7f3f7" stroke="#a9a9a9" stroke-width="1"/><rect x="612.5" y="155.5" width="9" height="3.5" fill="#f7f3f7" stroke="#a9a9a9" stroke-width="1"/><path d="M621 151.5L623 153.5L627.5 146.8" fill="none" stroke="#a9a9a9" stroke-width="1.1"/><circle cx="624" cy="158.5" r="2.8" fill="none" stroke="#a9a9a9" stroke-width="1"/><path d="M622 156.5L626 160.5" stroke="#a9a9a9" stroke-width="1"/><path d="M634 153.5H639L636.5 156.3Z" fill="#c0c0c0"/><rect x="647.5" y="101.7" width="4" height="11.7" fill="#f7f3f7" stroke="#a9a9a9" stroke-width="1"/><path d="M647.5 104.7H651.5M647.5 107.6H651.5M647.5 110.5H651.5M652.8 107.6H656.5M655.2 106.3L656.6 107.6L655.2 108.9" fill="none" stroke="#a9a9a9" stroke-width="0.9"/><rect x="658.2" y="105.2" width="4.8" height="4.8" fill="#f7f3f7" stroke="#a9a9a9" stroke-width="1"/><rect x="647.5" y="127.5" width="5" height="5" fill="#f7f3f7" stroke="#a9a9a9" stroke-width="1"/><rect x="657.5" y="123.7" width="5" height="5" fill="#f7f3f7" stroke="#a9a9a9" stroke-width="1"/><rect x="657.5" y="133" width="5" height="5" fill="#f7f3f7" stroke="#a9a9a9" stroke-width="1"/><path d="M652.5 129.5L657.5 126.5M652.5 131L657.5 135" stroke="#a9a9a9" stroke-width="0.9"/><rect x="705.3" y="103.4" width="25" height="25" fill="#f7f3f7" stroke="#c4c4c4" stroke-width="1"/><path d="M705 108.5H730.5M705 113.5H730.5M705 118.5H730.5M705 123.5H730.5M710.3 103V128.5M715.3 103V128.5M720.3 103V128.5M725.3 103V128.5" stroke="#c4c4c4" stroke-width="1"/><rect x="707.8" y="109" width="5" height="4.5" fill="#f7f3f7" stroke="#a9a9a9" stroke-width="1"/><rect x="707.8" y="117.5" width="5" height="4.5" fill="#f7f3f7" stroke="#a9a9a9" stroke-width="1"/><path d="M721 117.2A5.3 5.3 0 1 1 728.6 121.8C727 122.8 726.6 123.3 726.6 125.5" fill="none" stroke="#f3f3f3" stroke-width="5.5"/><path d="M721 117.2A5.3 5.3 0 1 1 728.6 121.8C727 122.8 726.6 123.3 726.6 125.5" fill="none" stroke="#a9a9a9" stroke-width="3"/><rect x="724.8" y="127.6" width="3.6" height="3.6" fill="#a9a9a9"/><rect x="768.6" y="103.4" width="27" height="20" fill="#f7f3f7" stroke="#c4c4c4" stroke-width="1"/><path d="M768.5 108.5H795.5M768.5 113.5H795.5M768.5 118.5H795.5M775.5 103V123.5M782.5 103V123.5M789.5 103V123.5" stroke="#c4c4c4" stroke-width="1"/><path d="M769.5 123.5L774 127H779L780.5 124.5L782 127H788L791 123.5" fill="#f7f3f7" stroke="#c4c4c4" stroke-width="1"/><path d="M770 120.5L776 114L780 118L786 111L791.5 106" fill="none" stroke="#f3f3f3" stroke-width="4"/><path d="M770 120.5L776 114L780 118L786 111L791.5 106" fill="none" stroke="#a9a9a9" stroke-width="2"/><path d="M787 104.5H793.2V110.7Z" fill="#a9a9a9"/><rect x="838.5" y="98.5" width="31" height="30" fill="#fff" stroke="#7f7f7f" stroke-width="1"/><path d="M849.5 106.5H847V118.5H849.5" fill="none" stroke="#666" stroke-width="1"/><rect x="846.5" y="110.5" width="5.5" height="5.5" fill="#fff" stroke="#666" stroke-width="1"/><path d="M849.25 111.7V114.8M847.7 113.25H850.8" stroke="#666" stroke-width="0.9"/><rect x="854.5" y="106.5" width="7" height="12" fill="#fff" stroke="#666" stroke-width="1"/><path d="M854.5 110.5H861.5M854.5 114.5H861.5" stroke="#666" stroke-width="1"/><path d="M856 108.5H860M856 112.5H860M856 116.5H860" stroke="#3b8ad9" stroke-width="1"/><path d="M851.8 155.3H857.2L854.5 158.2Z" fill="#777"/><path d="M899.5 181.6L904.6 176.8L909.7 181.6" fill="none" stroke="#555" stroke-width="1"/><path d="M135.9 155H141L138.45 157.8Z" fill="#777"/><path d="M211.8 156H215.6L213.7 158.2Z" fill="#c0c0c0"/><path d="M304.5 156H309L306.75 158.2Z" fill="#c0c0c0"/><path d="M732 156H737L734.5 158.3Z" fill="#c0c0c0"/><path d="M124 207.3H131.3L127.65 211.2Z" fill="#707070"/><circle cx="152.8" cy="205.5" r="0.9" fill="#999"/><circle cx="152.8" cy="210" r="0.9" fill="#999"/><circle cx="152.8" cy="214.5" r="0.9" fill="#999"/><path d="M182.2 205.8L192.3 215M192.3 205.8L182.2 215" stroke="#666" stroke-width="1.7"/><path d="M216.8 210.5L221 214.6L229.8 205.6" fill="none" stroke="#777" stroke-width="2.2"/><text x="252.8" y="214" font-family="Liberation Serif" font-style="italic" font-weight="bold" font-size="13.5" fill="#2e7d4f">f</text><text x="258.3" y="214.5" font-family="Liberation Serif" font-style="italic" font-weight="bold" font-size="10" fill="#2e7d4f">x</text><path d="M900.5 207.2L903.8 210.5L907.1 207.2" fill="none" stroke="#666" stroke-width="1.2"/><path d="M42 248.7H53V238Z" fill="#b7b7b7"/><circle cx="106" cy="794.9" r="2.9" fill="#5f5f5f"/><rect x="110.2" y="793.1" width="5.8" height="2.4" fill="#5f5f5f"/><path d="M104.9 799.2V804.3H115.4V793.5" fill="none" stroke="#5f5f5f" stroke-width="1.1"/><g stroke="#5f5f5f" stroke-width="0.9"><path d="M108.5 798.5h1.5M111.5 798.5h1.5M105.8 800.6h1.5M108.5 800.6h1.5M111.5 800.6h1.5M105.8 802.6h1.5M108.5 802.6h1.5M111.5 802.6h1.5"/></g><rect x="617.7" y="792.5" width="12" height="12" fill="#fff" stroke="#5f5f5f" stroke-width="1"/><path d="M621.7 792.5V804.5M625.7 792.5V804.5M617.7 796.5H629.7M617.7 800.5H629.7" stroke="#5f5f5f" stroke-width="1"/><rect x="657.5" y="792.5" width="13" height="12" fill="none" stroke="#5f5f5f" stroke-width="1"/><rect x="660.5" y="794.5" width="7" height="8" fill="none" stroke="#5f5f5f" stroke-width="1"/><path d="M662 796.8H666M662 798.6H666M662 800.4H666" stroke="#5f5f5f" stroke-width="0.8"/><rect x="697.5" y="792.5" width="13" height="12" fill="none" stroke="#5f5f5f" stroke-width="1"/><path d="M697.5 800.5H705.5V792.5M701.5 792.5V800.5" fill="none" stroke="#5f5f5f" stroke-width="1"/><path d="M730 798.5H737.8M842.5 798.5H742.6M847.3 798.5H855.8M851.55 794.5V802.5M793.3 796V801" stroke="#8a8a8a" stroke-width="1"/></svg>
</body></html>
